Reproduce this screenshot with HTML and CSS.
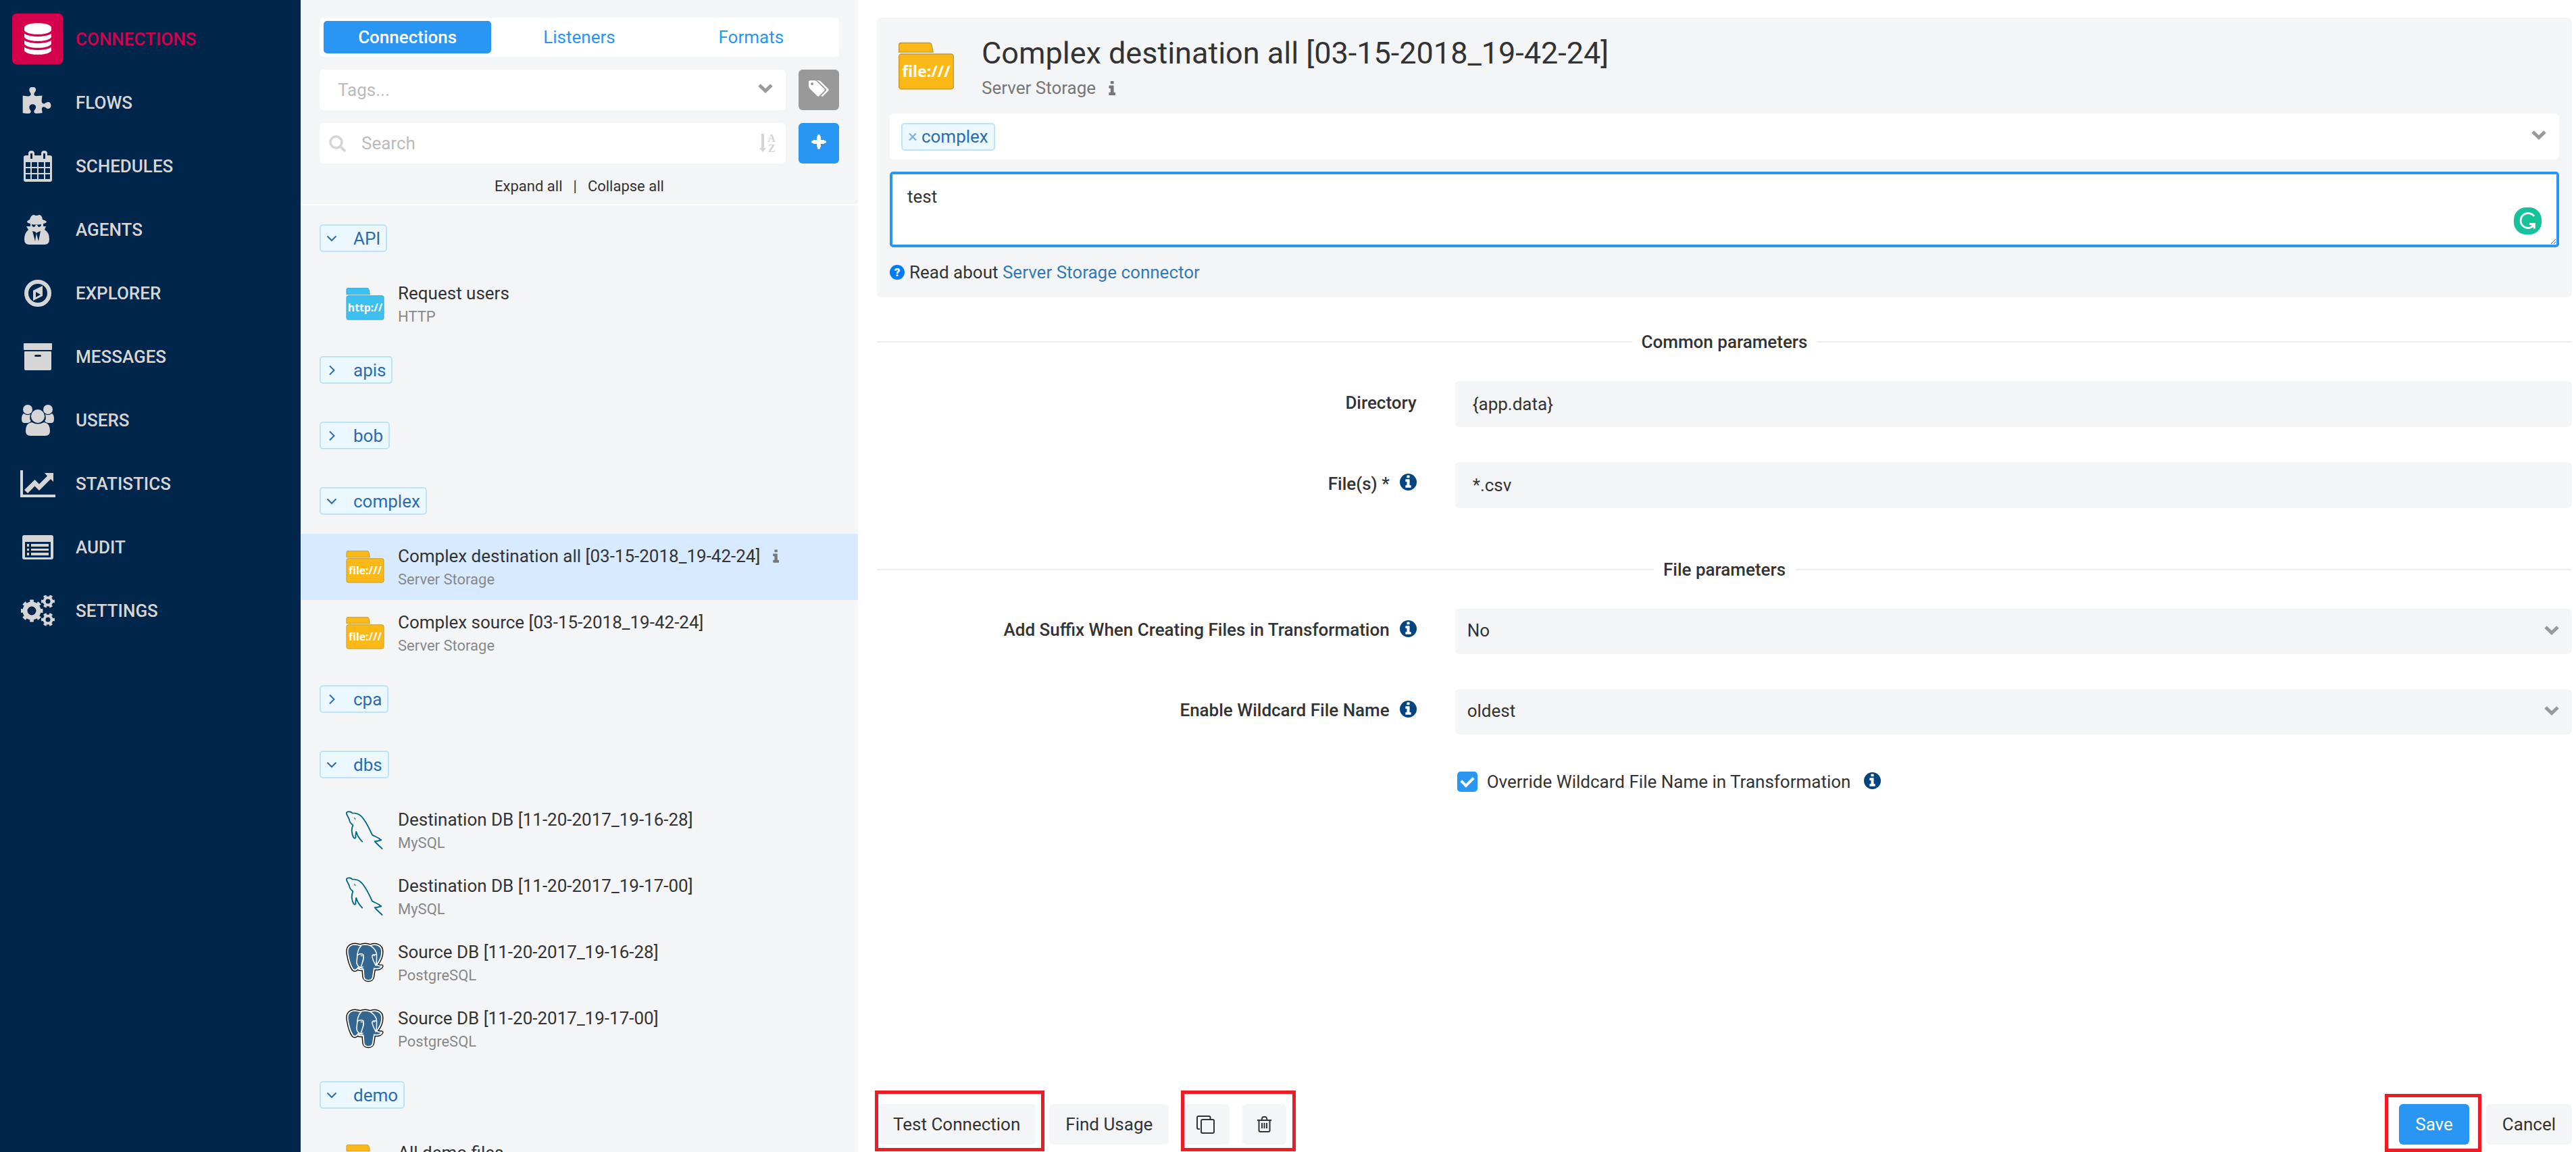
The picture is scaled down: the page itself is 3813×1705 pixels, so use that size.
FILE: index.html
```html
<!DOCTYPE html>
<html lang="en">
<head>
  <meta charset="UTF-8" />
  <meta name="viewport" content="width=device-width, initial-scale=1.0"/>
  <title>Connections</title>
  <link rel="stylesheet" href="styles.css">
</head>
<body>
  <!-- shared icons -->
  <svg class="sprite" aria-hidden="true">
    <symbol id="chevron" viewBox="0 0 22 14">
      <path d="M2 2l9 8.500L20 2" fill="none" stroke="currentColor" stroke-width="5"/>
    </symbol>
    <symbol id="arrow-down" viewBox="0 0 16 16">
      <path d="M1.500 4.500L8 11l6.500-6.500" fill="none" stroke="currentColor" stroke-width="2"/>
    </symbol>
    <symbol id="arrow-right" viewBox="0 0 16 16">
      <path d="M5 1.500L11.500 8 5 14.500" fill="none" stroke="currentColor" stroke-width="2"/>
    </symbol>
    <symbol id="info" viewBox="384 288 640 1120">
      <path fill="currentColor" d="M1024 1376v-160q0-14-9-23t-23-9h-96v-512q0-14-9-23t-23-9h-320q-14 0-23 9t-9 23v160q0 14 9 23t23 9h96v320h-96q-14 0-23 9t-9 23v160q0 14 9 23t23 9h448q14 0 23-9t9-23zm-128-896v-160q0-14-9-23t-23-9h-192q-14 0-23 9t-9 23v160q0 14 9 23t23 9h192q14 0 23-9t9-23z"/>
    </symbol>
    <symbol id="info-circle" viewBox="0 128 1536 1536">
      <circle cx="768" cy="896" r="768" fill="#004480"/>
      <path fill="#fff" d="M1024 1376v-160q0-14-9-23t-23-9h-96v-512q0-14-9-23t-23-9h-320q-14 0-23 9t-9 23v160q0 14 9 23t23 9h96v320h-96q-14 0-23 9t-9 23v160q0 14 9 23t23 9h448q14 0 23-9t9-23zm-128-896v-160q0-14-9-23t-23-9h-192q-14 0-23 9t-9 23v160q0 14 9 23t23 9h192q14 0 23-9t9-23z"/>
    </symbol>
    <symbol id="folder" viewBox="0 0 58 50">
      <path d="M1 10.500V3a2 2 0 0 1 2-2h29q2 0 2.500 2l1.500 7.500z"/>
      <rect x="1" y="12.500" width="56" height="36" rx="2.500"/>
    </symbol>
    <symbol id="mysql" viewBox="0 0 60 60">
      <path d="M1 4C0 0 7 0 10 3c6 0 11 2 14 5 8 8 12 19 17 29 5 3 10 4 14 8-3 1-7 2-10 2 3 4 8 8 12 12M1 4c1 4 4 6 5 12 1 3 3 4 5 6-3 6-2 14 1 19 2 3 4 0 3-2l1-7c2 7 6 12 10 16" fill="none" stroke="#00698c" stroke-width="2" stroke-linejoin="round"/>
      <path d="M12 10l3 1v3z" fill="#00698c"/>
    </symbol>
    <symbol id="postgres" viewBox="0 0 60 62">
      <path d="M22 4C10 0 1 4 3 17c2 12 5 20 8 24 3 3 6 1 9-4-2 4 0 5 7 4l1 12c1 7 13 7 14 0l2-13c5 1 11 0 12-4-3 0-6 0-8-2 5-6 8-14 8-20C56 3 46 1 38 4c-5-2-11-2-16 0z" fill="#111" stroke="#111" stroke-width="5" stroke-linejoin="round"/>
      <path d="M22 4C10 0 1 4 3 17c2 12 5 20 8 24 3 3 6 1 9-4-2 4 0 5 7 4l1 12c1 7 13 7 14 0l2-13c5 1 11 0 12-4-3 0-6 0-8-2 5-6 8-14 8-20C56 3 46 1 38 4c-5-2-11-2-16 0z" fill="#336791" stroke="#fff" stroke-width="2"/>
      <path d="M24 4c-7 7-6 16-7 24-1 6 2 8 5 10M18 19c3-2 7-2 9-1 2 6-1 12-4 20l4 3M38 4c6 4 10 9 10 15-5-2-8 0-7 3 1 5 4 10 6 14M48 19c0 6 0 11-1 16M27 37l-7 3" fill="none" stroke="#fff" stroke-width="1.600"/>
      <path d="M23 20h3M43 20h2" stroke="#fff" stroke-width="1.500"/>
    </symbol>
  </svg>

  <nav class="sidebar">
    <a href="#" class="nav-item active">
      <span class="nav-icon"><svg width="40" height="47" viewBox="0 0 1536 1792" fill="currentColor"><path d="M768 768q237 0 443-43t325-127v170q0 69-103 128t-280 93.500-385 34.500-385-34.500-280-93.500-103-128v-170q119 84 325 127t443 43zm0 768q237 0 443-43t325-127v170q0 69-103 128t-280 93.500-385 34.500-385-34.500-280-93.500-103-128v-170q119 84 325 127t443 43zm0-384q237 0 443-43t325-127v170q0 69-103 128t-280 93.500-385 34.500-385-34.500-280-93.500-103-128v-170q119 84 325 127t443 43zm0-1152q208 0 385 34.500t280 93.500 103 128v128q0 69-103 128t-280 93.500-385 34.500-385-34.500-280-93.500-103-128v-128q0-69 103-128t280-93.500 385-34.500z"/></svg></span>
      Connections
    </a>
    <a href="#" class="nav-item">
      <span class="nav-icon"><svg width="45" height="45" viewBox="64 0 1792 1792" fill="currentColor"><path d="M1755 1083q0 81-44.500 135t-123.500 54q-41 0-77.500-17.500t-59-38-56.500-38-71-17.500q-110 0-110 124 0 39 16 115t15 115v5q-22 0-33 1-34 3-97.500 11.500t-115.500 13.500-98 5q-61 0-103-26.500t-42-83.500q0-37 17.500-71t38-56.500 38-59 17.500-77.500q0-79-54-123.500t-135-44.500q-84 0-143 45.500t-59 127.500q0 43 15 83t33.500 64.500 33.500 53 15 50.500q0 45-46 89-37 35-117 35-95 0-245-24-9-2-27.500-4t-27.500-4l-13-2q-1 0-3-1-2 0-2-1v-1024q2 1 17.500 3.500t34 5 21.500 3.500q150 24 245 24 80 0 117-35 46-44 46-89 0-22-15-50.500t-33.500-53-33.500-64.500-15-83q0-82 59-127.500t144-45.500q80 0 134 44.500t54 123.500q0 41-17.500 77.500t-38 59-38 56.500-17.500 71q0 57 42 83.500t103 26.500q64 0 180-15t163-17v2q-1 2-3.500 17.500t-5 34-3.500 21.500q-24 150-24 245 0 80 35 117 44 46 89 46 22 0 50.500-15t53-33.500 64.500-33.500 83-15q82 0 127.500 59t45.500 143z"/></svg></span>
      Flows
    </a>
    <a href="#" class="nav-item">
      <span class="nav-icon"><svg width="42" height="46" viewBox="0 0 42 46"><path fill="currentColor" fill-rule="evenodd" d="M3 7h4V4q0-4 4.500-4T16 4v3h10V4q0-4 4.500-4T35 4v3h4q3 0 3 3v33q0 3-3 3H3q-3 0-3-3V10q0-3 3-3zM10 4v8h3V4zm19 0v8h3V4zM3 17v7h7v-7zm9 0v7h8v-7zm10 0v7h8v-7zm10 0v7h7v-7zM3 26v7h7v-7zm9 0v7h8v-7zm10 0v7h8v-7zm10 0v7h7v-7zM3 35v7h7v-7zm9 0v7h8v-7zm10 0v7h8v-7zm10 0v7h7v-7z"/></svg></span>
      Schedules
    </a>
    <a href="#" class="nav-item">
      <span class="nav-icon"><svg width="40" height="44" viewBox="0 0 40 44"><path fill="currentColor" fill-rule="evenodd" d="M8 7Q10 0 14 0q4 2 8 0 4 0 5 7 4 1 6 3 0 2-5 3v4h4l-2 5q7 4 7 14 0 8-7 8H7q-7 0-7-8 0-9 6-14l-3-5h6v-4q-5-1-5-3 1-2 4-3zM11 14q0 4 4 4l2-3h2l2 3q4 0 4-4-7 1-14 0zM12 24l4 15 2-12-2-2zm12 0l-5 2-1 2 3 11z"/></svg></span>
      Agents
    </a>
    <a href="#" class="nav-item">
      <span class="nav-icon"><svg width="40" height="40" viewBox="0 0 40 40"><circle cx="20" cy="20" r="17" fill="none" stroke="currentColor" stroke-width="6"/><path fill="currentColor" fill-rule="evenodd" d="M13 16l14-7v15l-14 7zM17 18v8l7-4z"/></svg></span>
      Explorer
    </a>
    <a href="#" class="nav-item">
      <span class="nav-icon"><svg width="42" height="40" viewBox="0 0 42 40"><path fill="currentColor" fill-rule="evenodd" d="M1 0h40q1 0 1 1v8q0 1-1 1H1q-1 0-1-1V1q0-1 1-1zM2 12h38q1 0 1 1v25q0 2-2 2H3q-2 0-2-2V13q0-1 1-1zm16 5q-2 0-2 1.500T18 20h6q2 0 2-1.500T24 17z"/></svg></span>
      Messages
    </a>
    <a href="#" class="nav-item">
      <span class="nav-icon"><svg width="50" height="46" viewBox="0 0 50 46" fill="currentColor"><circle cx="10" cy="7" r="7"/><circle cx="40" cy="7" r="7"/><path d="M4 13q6 4 10 1-2 8 1 10l-2 2-3 1H5q-4 0-4-6 0-6 3-8zM46 13q-6 4-10 1 2 8-1 10l2 2 3 1h5q4 0 4-6 0-6-3-8z"/><circle cx="25" cy="17" r="10"/><path d="M16 26q9 5 18 0 9 1 9 13 0 7-7 7H14q-7 0-7-7 0-12 9-13z"/></svg></span>
      Users
    </a>
    <a href="#" class="nav-item">
      <span class="nav-icon"><svg width="52" height="40" viewBox="0 0 52 40" fill="currentColor"><path d="M0 0h4v36h48v4H0zM36 4h13v13l-4-4-17 17-6.500-6.500L11 34l-5-5 15.500-15L28 20.500 40 8.500z"/></svg></span>
      Statistics
    </a>
    <a href="#" class="nav-item">
      <span class="nav-icon"><svg width="46" height="36" viewBox="0 0 46 36" fill="currentColor"><path fill-rule="evenodd" d="M3 0h40q3 0 3 3v30q0 3-3 3H3q-3 0-3-3V3q0-3 3-3zm1 10v23h38V10z"/><path d="M7 13h3v4H7zm6 0h26v4H13zM7 20h3v3H7zm6 0h26v3H13zM7 26h3v4H7zm6 0h26v4H13z"/></svg></span>
      Audit
    </a>
    <a href="#" class="nav-item">
      <span class="nav-icon"><svg width="50" height="46" viewBox="0 0 50 46" fill="none" stroke="currentColor"><circle cx="16" cy="23" r="10" stroke-width="7"/><circle cx="16" cy="23" r="14" stroke-width="5" pathLength="16" stroke-dasharray="1 1" stroke-dashoffset="0.5"/><circle cx="40" cy="9" r="5.500" stroke-width="4"/><circle cx="40" cy="9" r="8" stroke-width="4" pathLength="12" stroke-dasharray="1 1" stroke-dashoffset="0.5"/><circle cx="40" cy="36" r="5.500" stroke-width="4"/><circle cx="40" cy="36" r="8" stroke-width="4" pathLength="12" stroke-dasharray="1 1" stroke-dashoffset="0.5"/></svg></span>
      Settings
    </a>
  </nav>

  <aside class="panel">
    <div class="panel-top">
      <div class="tabs">
        <button class="tab active">Connections</button>
        <button class="tab">Listeners</button>
        <button class="tab">Formats</button>
      </div>
      <div class="tool-row">
        <div class="field">
          <input type="text" placeholder="Tags..." aria-label="Tags">
          <svg class="chevron" width="22" height="14"><use href="#chevron"/></svg>
        </div>
        <button class="square gray" aria-label="Manage tags"><svg width="30" height="28" viewBox="0 0 1920 1792" fill="#fff"><path d="M448 448q0-53-37.500-90.500t-90.500-37.500-90.500 37.500-37.500 90.500 37.500 90.500 90.500 37.500 90.500-37.500 37.500-90.500zm1067 576q0 53-37 90l-491 492q-39 37-91 37-53 0-90-37l-715-716q-38-37-64.500-101t-26.500-117v-416q0-52 38-90t90-38h416q53 0 117 26.500t102 64.500l715 714q37 39 37 91zm384 0q0 53-37 90l-491 492q-39 37-91 37-36 0-59-14t-53-45l470-470q37-37 37-90 0-52-37-91l-715-714q-38-38-102-64.500t-117-26.500h224q53 0 117 26.500t102 64.500l715 714q37 39 37 91z"/></svg></button>
      </div>
      <div class="tool-row">
        <div class="field search">
          <svg width="25" height="25" viewBox="0 0 25 25" fill="none" stroke="#d5d5d5"><circle cx="10.500" cy="10.500" r="8.500" stroke-width="3.600"/><path d="M17 17l7 7" stroke-width="4"/></svg>
          <input type="text" placeholder="Search" aria-label="Search">
          <svg class="sort" width="25" height="28" viewBox="0 0 25 28" fill="#d5d5d5"><path d="M3 0h4v21h3l-5 6-5-6h3z"/><text x="18" y="12" class="sort-text">A</text><text x="18" y="27" class="sort-text">Z</text></svg>
        </div>
        <button class="square" aria-label="Add connection"><svg width="22" height="22" viewBox="0 0 22 22"><path d="M11 3v16M3 11h16" stroke="#fff" stroke-width="6" stroke-linejoin="round"/><path d="M11 2v18M2 11h18" stroke="#fff" stroke-width="4" stroke-linecap="round"/></svg></button>
      </div>
      <div class="toggle-all"><a href="#">Expand all</a><span>|</span><a href="#">Collapse all</a></div>
    </div>

    <div class="tree">
      <div class="group"><button class="tag"><svg width="16" height="16"><use href="#arrow-down"/></svg>API</button></div>
      <div class="item">
        <svg class="http" width="57" height="50" viewBox="0 0 58 50"><use href="#folder"/><text x="29" y="36" class="folder-text">http://</text></svg>
        <div><div class="item-name">Request users</div><div class="item-type">HTTP</div></div>
      </div>
      <div class="group"><button class="tag"><svg width="16" height="16"><use href="#arrow-right"/></svg>apis</button></div>
      <div class="group"><button class="tag"><svg width="16" height="16"><use href="#arrow-right"/></svg>bob</button></div>
      <div class="group"><button class="tag"><svg width="16" height="16"><use href="#arrow-down"/></svg>complex</button></div>
      <div class="item selected">
        <svg class="file" width="57" height="50" viewBox="0 0 58 50"><use href="#folder"/><text x="29" y="36" class="folder-text">file:///</text></svg>
        <div><div class="item-name">Complex destination all [03-15-2018_19-42-24]<svg class="info-mark" width="11" height="20"><use href="#info"/></svg></div><div class="item-type">Server Storage</div></div>
      </div>
      <div class="item">
        <svg class="file" width="57" height="50" viewBox="0 0 58 50"><use href="#folder"/><text x="29" y="36" class="folder-text">file:///</text></svg>
        <div><div class="item-name">Complex source [03-15-2018_19-42-24]</div><div class="item-type">Server Storage</div></div>
      </div>
      <div class="group"><button class="tag"><svg width="16" height="16"><use href="#arrow-right"/></svg>cpa</button></div>
      <div class="group"><button class="tag"><svg width="16" height="16"><use href="#arrow-down"/></svg>dbs</button></div>
      <div class="item">
        <svg width="57" height="60"><use href="#mysql"/></svg>
        <div><div class="item-name">Destination DB [11-20-2017_19-16-28]</div><div class="item-type">MySQL</div></div>
      </div>
      <div class="item">
        <svg width="57" height="60"><use href="#mysql"/></svg>
        <div><div class="item-name">Destination DB [11-20-2017_19-17-00]</div><div class="item-type">MySQL</div></div>
      </div>
      <div class="item">
        <svg width="57" height="60"><use href="#postgres"/></svg>
        <div><div class="item-name">Source DB [11-20-2017_19-16-28]</div><div class="item-type">PostgreSQL</div></div>
      </div>
      <div class="item">
        <svg width="57" height="60"><use href="#postgres"/></svg>
        <div><div class="item-name">Source DB [11-20-2017_19-17-00]</div><div class="item-type">PostgreSQL</div></div>
      </div>
      <div class="group"><button class="tag"><svg width="16" height="16"><use href="#arrow-down"/></svg>demo</button></div>
      <div class="item">
        <svg class="file" width="57" height="50" viewBox="0 0 58 50"><use href="#folder"/></svg>
        <div><div class="item-name">All demo files</div></div>
      </div>
    </div>
  </aside>

  <main class="main">
    <section class="header">
      <div class="header-top">
        <svg class="header-icon file" width="84" height="72" viewBox="0 0 58 50"><use href="#folder"/><text x="29" y="36" class="folder-text">file:///</text></svg>
        <div>
          <h1>Complex destination all [03-15-2018_19-42-24]</h1>
          <div class="subtitle">Server Storage<svg class="info-mark" width="12" height="21"><use href="#info"/></svg></div>
        </div>
      </div>
      <div class="tag-select">
        <button class="tag"><span class="remove">×</span>complex</button>
        <svg class="chevron" width="22" height="14"><use href="#chevron"/></svg>
      </div>
      <div class="note">
        <textarea aria-label="Description">test</textarea>
        <svg class="checker" width="41" height="40" viewBox="0 0 41 40"><rect width="41" height="40" rx="18" fill="#15c39a"/><path d="M30 13a11 11 0 1 0 0 13M23 24.500h7.500v7M30 25l-5 4.500" fill="none" stroke="#fff" stroke-width="2.800"/></svg>
      </div>
      <div class="read-about">
        <svg width="22" height="22" viewBox="0 0 22 22"><circle cx="11" cy="11" r="11" fill="#007bff"/><text x="11" y="17" class="help-text">?</text></svg>
        <span>Read about <a href="#">Server Storage connector</a></span>
      </div>
    </section>

    <form class="params">
      <h2 class="divider">Common parameters</h2>
      <div class="row">
        <label for="directory">Directory</label>
        <input type="text" id="directory" value="{app.data}">
      </div>
      <div class="row">
        <label for="files">File(s) *<svg class="help" width="25" height="25"><use href="#info-circle"/></svg></label>
        <input type="text" id="files" value="*.csv">
      </div>

      <h2 class="divider">File parameters</h2>
      <div class="row">
        <label for="suffix">Add Suffix When Creating Files in Transformation<svg class="help" width="25" height="25"><use href="#info-circle"/></svg></label>
        <div class="select">
          <select id="suffix"><option>No</option><option>Yes</option></select>
          <svg class="chevron" width="22" height="14"><use href="#chevron"/></svg>
        </div>
      </div>
      <div class="row">
        <label for="wildcard">Enable Wildcard File Name<svg class="help" width="25" height="25"><use href="#info-circle"/></svg></label>
        <div class="select">
          <select id="wildcard"><option>oldest</option><option>newest</option><option>all</option></select>
          <svg class="chevron" width="22" height="14"><use href="#chevron"/></svg>
        </div>
      </div>
      <div class="row">
        <div class="check">
          <input type="checkbox" id="override" checked>
          <label for="override">Override Wildcard File Name in Transformation</label>
          <svg class="help" width="25" height="25"><use href="#info-circle"/></svg>
        </div>
      </div>
    </form>

    <footer class="actions">
      <div class="marked test"><button class="btn">Test Connection</button></div>
      <button class="btn">Find Usage</button>
      <div class="marked icons">
        <button class="btn" aria-label="Copy"><svg width="27" height="27" viewBox="0 0 27 27" fill="none" stroke="#333" stroke-width="2"><rect x="7" y="6" width="19" height="20" rx="2"/><path d="M20.500 5V3q0-2-2-2H3Q1 1 1 3v15q0 2 2 2h2"/></svg></button>
        <button class="btn" aria-label="Delete"><svg width="21" height="24" viewBox="0 0 21 24" fill="none" stroke="#333" stroke-width="2"><path d="M0 6h21M6.500 5l1-3q.5-1 1.500-1h3q1 0 1.500 1l1 3M2.500 6v15q0 2 2 2h12q2 0 2-2V6M7 10v8M10.500 10v8M14 10v8"/></svg></button>
      </div>
      <div class="marked save"><button class="btn primary">Save</button></div>
      <button class="btn cancel">Cancel</button>
    </footer>
  </main>
</body>
</html>
```
FILE: styles.css
```css
* {
  box-sizing: border-box;
}

body {
  margin: 0;
  display: flex;
  height: 100vh;
  overflow: hidden;
  font-family: Roboto, Arial, sans-serif;
  font-size: 26px;
  line-height: 36px;
  color: #333;
  background: #fff;
}

a {
  text-decoration: none;
}

svg {
  display: block;
  flex: none;
}

button, input, select, textarea {
  font: inherit;
  color: inherit;
  border: none;
  outline: none;
}

button {
  cursor: pointer;
}

.sprite {
  position: absolute;
  width: 0;
  height: 0;
}

.file {
  fill: #fbb917;
  stroke: #c79a2c;
}

.http {
  fill: #3bc0f0;
  stroke: #3aa5cc;
}

.folder-text {
  font: bold 16px "Open Sans", sans-serif;
  fill: #fff;
  stroke: none;
  text-anchor: middle;
}

.sort {
  overflow: visible;
}

.sort-text {
  font: bold 16px "Liberation Serif", serif;
  text-anchor: middle;
}

.help-text {
  font: 900 17px Roboto, sans-serif;
  fill: #fff;
  text-anchor: middle;
}

/* sidebar */
.sidebar {
  flex: none;
  width: 445px;
  padding: 20px 18px;
  display: flex;
  flex-direction: column;
  gap: 19px;
  background: #00264b;
}

.nav-item {
  display: flex;
  align-items: center;
  gap: 19px;
  color: #d6d6d6;
  font-weight: 500;
  text-transform: uppercase;
}

.nav-icon {
  width: 75px;
  height: 75px;
  display: flex;
  align-items: center;
  justify-content: center;
  border-radius: 6px;
}

.nav-item.active {
  color: #d5004c;
}

.nav-item.active .nav-icon {
  color: #fff;
  background: #d5004c;
}

/* connections list */
.panel {
  flex: none;
  width: 825px;
  display: flex;
  flex-direction: column;
  background: #f3f5f7;
}

.panel-top {
  padding: 26px 28px 8px;
  border-bottom: 2px solid #fff;
}

.tabs {
  display: grid;
  grid-template-columns: repeat(3, 1fr);
  gap: 6px;
  padding: 5px 6px;
  background: #fff;
  border-radius: 6px;
}

.tab {
  height: 48px;
  padding: 0;
  border-radius: 5px;
  background: none;
  color: #2996f3;
}

.tab.active {
  background: #2996f3;
  color: #fff;
  font-weight: 500;
}

.tool-row {
  display: flex;
  gap: 19px;
  margin-top: 19px;
}

.field {
  flex: 1;
  display: flex;
  align-items: center;
  height: 60px;
  padding: 0 19px 0 27px;
  background: #fff;
  border-radius: 6px;
}

.field input {
  flex: 1;
  min-width: 0;
  padding: 0;
  background: none;
}

.field input::placeholder {
  color: #bbb;
}

.search {
  gap: 23px;
  padding: 0 14px;
}

.chevron {
  margin-bottom: 4px;
  color: #999;
}

.square {
  width: 60px;
  height: 60px;
  padding: 0 0 4px;
  display: flex;
  align-items: center;
  justify-content: center;
  border-radius: 6px;
  background: #2996f3;
}

.square.gray {
  background: #999;
}

.toggle-all {
  display: flex;
  justify-content: center;
  gap: 16px;
  margin-top: 16px;
  font-size: 22px;
}

.toggle-all a {
  color: #333;
}

.tree {
  flex: 1;
  min-height: 0;
  overflow: hidden;
}

.group {
  height: 97px;
  padding-left: 28px;
  display: flex;
  align-items: center;
}

.tag {
  height: 41px;
  padding: 0 8px;
  display: flex;
  align-items: center;
  gap: 24px;
  border: 2px solid #bde3f8;
  border-radius: 5px;
  background: #ebf8ff;
  color: #2b6cb0;
}

.item {
  height: 98px;
  padding-left: 67px;
  display: flex;
  align-items: center;
  gap: 20px;
}

/* last row runs under the bottom edge */
.item:last-child {
  align-items: flex-start;
  padding-top: 24px;
}

.item:last-child .item-name {
  line-height: 1;
}

.item.selected {
  background: #d8eaff;
}

.item-name, .subtitle {
  display: flex;
  align-items: center;
  gap: 17px;
}

.item-type {
  font-size: 22px;
  line-height: 33px;
  color: #888;
}

.info-mark {
  color: #777;
}

/* details */
.main {
  flex: 1;
  min-width: 0;
  padding: 26px 6px 11px 28px;
  display: flex;
  flex-direction: column;
}

.header {
  padding: 27px 19px 19px;
  border-radius: 6px;
  background: #f3f5f7;
}

.header-top {
  display: flex;
  gap: 40px;
  padding-left: 12px;
}

.header-icon {
  margin-top: 9px;
}

h1 {
  margin: 0 0 7px;
  font-size: 45px;
  line-height: 52px;
  font-weight: 400;
}

.subtitle {
  color: #777;
}

.tag-select {
  height: 68px;
  margin-top: 20px;
  padding: 0 19px 0 17px;
  display: flex;
  align-items: center;
  justify-content: space-between;
  border-radius: 6px;
  background: #fff;
}

.tag-select .tag {
  gap: 6px;
}

.remove {
  opacity: 0.5;
}

.note {
  position: relative;
  margin-top: 18px;
}

textarea {
  display: block;
  width: 100%;
  height: 112px;
  padding: 15px 22px;
  border: 4px solid #2996f3;
  border-radius: 5px;
  background: #fff;
}

.checker {
  position: absolute;
  right: 26px;
  bottom: 19px;
}

.read-about {
  display: flex;
  align-items: center;
  gap: 7px;
  margin-top: 19px;
}

.read-about a {
  color: #337ab7;
}

.params {
  margin-top: 48px;
}

.divider {
  display: flex;
  align-items: center;
  gap: 14px;
  margin: 73px 0 40px;
  font-size: 26px;
  font-weight: 500;
}

.divider:first-child {
  margin-top: 0;
}

.divider::before, .divider::after {
  content: "";
  flex: 1;
  height: 2px;
  background: #eee;
}

.row {
  display: grid;
  grid-template-columns: 1fr 2.07fr;
  column-gap: 57px;
  align-items: center;
  margin-bottom: 52px;
}

.row > label {
  display: flex;
  align-items: center;
  justify-content: flex-end;
  gap: 15px;
  padding-bottom: 5px;
  font-weight: 500;
}

.row > input, select {
  width: 100%;
  height: 68px;
  padding: 0 26px;
  border-radius: 6px;
  background: #f3f5f7;
}

.help {
  margin-bottom: 4px;
}

.select {
  display: grid;
  align-items: center;
}

.select select {
  grid-area: 1 / 1;
  height: 67px;
  padding: 0 18px 4px;
  appearance: none;
}

.select .chevron {
  grid-area: 1 / 1;
  justify-self: end;
  margin-right: 19px;
  pointer-events: none;
}

.check {
  grid-column: 2;
  display: flex;
  align-items: center;
  padding-left: 3px;
}

.check input {
  appearance: none;
  width: 30px;
  height: 30px;
  margin: 0 14px 0 0;
  border-radius: 5px;
  background: #2996f3;
  display: flex;
  align-items: center;
  justify-content: center;
}

.check input:checked::before {
  content: "";
  width: 14px;
  height: 8px;
  margin-bottom: 4px;
  border-left: 4px solid #fff;
  border-bottom: 4px solid #fff;
  transform: rotate(-45deg);
}

.check .help {
  margin-left: 20px;
}

/* bottom buttons */
.actions {
  display: flex;
  gap: 19px;
  margin-top: auto;
}

.btn {
  height: 60px;
  padding: 0 24px;
  border-radius: 6px;
  background: #f3f5f7;
}

.icons .btn {
  padding: 0 22px;
}

.primary {
  background: #2996f3;
  color: #fff;
}

.save {
  margin-left: auto;
}

.cancel {
  margin-left: 6px;
}

.marked {
  position: relative;
  display: flex;
  gap: 19px;
}

/* red highlight frame around a button */
.marked::after {
  content: "";
  position: absolute;
  top: -20px;
  bottom: -10px;
  left: -3px;
  right: -12px;
  border: 5px solid #ed1c24;
  pointer-events: none;
}

.icons::after {
  left: -1px;
  right: -14px;
}

.save::after {
  top: -15px;
  bottom: -11px;
  left: -21px;
  right: -18px;
}
```
